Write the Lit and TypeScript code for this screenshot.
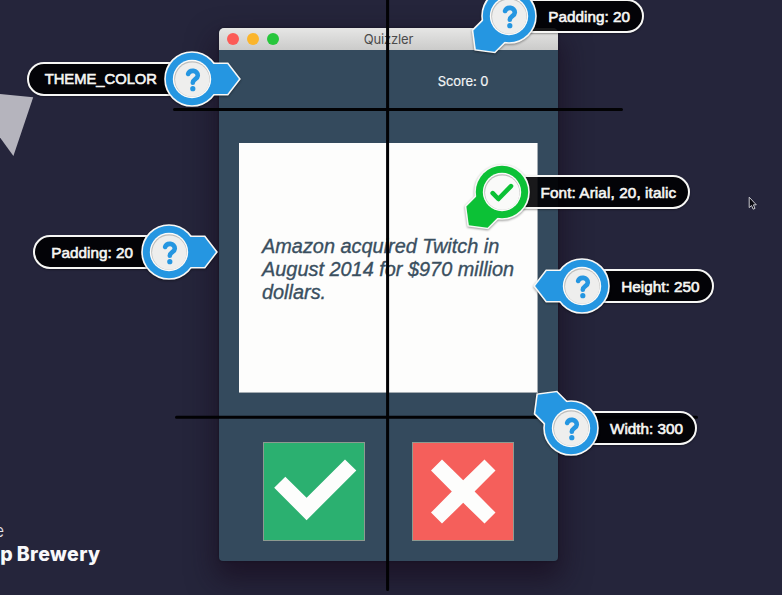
import { LitElement, html, css, svg } from "lit";
import { customElement, property } from "lit/decorators.js";
import { styleMap } from "lit/directives/style-map.js";
import { classMap } from "lit/directives/class-map.js";

type Side = "left" | "right";
type Kind = "question" | "done";

interface Note {
  x: number;
  y: number;
  label: string;
  side: Side;
  reach: number;
  angle: number;
  kind: Kind;
}

const NOTES: Note[] = [
  { x: 191.7, y: 78.8, label: "THEME_COLOR", side: "left", reach: 165, angle: 0, kind: "question" },
  { x: 509.3, y: 16, label: "Padding: 20", side: "right", reach: 135, angle: 135, kind: "question" },
  { x: 501.5, y: 191.5, label: "Font: Arial, 20, italic", side: "right", reach: 188.5, angle: 135, kind: "done" },
  { x: 168.7, y: 251.6, label: "Padding: 20", side: "left", reach: 135.4, angle: 0, kind: "question" },
  { x: 582.2, y: 285.6, label: "Height: 250", side: "right", reach: 131.4, angle: 180, kind: "question" },
  { x: 571, y: 427.5, label: "Width: 300", side: "right", reach: 126, angle: 225, kind: "question" },
];

@customElement("note-callout")
export class NoteCallout extends LitElement {
  @property() label = "";
  @property() side: Side = "right";
  @property() kind: Kind = "question";
  @property({ type: Number }) reach = 130;
  @property({ type: Number }) angle = 0;

  static styles = css`
    :host {
      display: block;
      width: 0;
      height: 0;
    }
    .pill {
      position: absolute;
      top: -17px;
      box-sizing: border-box;
      height: 34px;
      border: 2px solid #f7f7f5;
      background: rgba(0, 0, 2, 0.9);
      color: #f6f6f4;
      font: 15.3px/31px "Liberation Sans", Arial, sans-serif;
      -webkit-text-stroke: 0.6px #f6f6f4;
      white-space: nowrap;
      box-shadow: 0 1px 2px rgba(0, 0, 0, 0.35);
    }
    .right {
      left: 0;
      padding-left: 37px;
      border-radius: 0 17px 17px 0;
    }
    .left {
      right: 0;
      padding-left: 16px;
      border-radius: 17px 0 0 17px;
    }
    .wide {
      font-size: 14.75px;
    }
    .long {
      letter-spacing: 0.1px;
    }
    .badge {
      position: absolute;
      left: -54px;
      top: -54px;
      width: 108px;
      height: 108px;
      filter: drop-shadow(0 1px 1px rgba(0, 0, 0, 0.4));
    }
    .rim {
      fill: #f8f8f6;
      stroke: #f8f8f6;
      stroke-width: 3.2;
    }
    .question {
      fill: #2596e1;
    }
    .done {
      fill: #0cc136;
    }
    .ring {
      fill: #fbfbfa;
    }
    .edge {
      fill: #bdbdbb;
    }
    .face {
      fill: #eeeeed;
    }
    .face-done {
      fill: #fafaf9;
    }
    .mark {
      fill: none;
      stroke-width: 4.6;
      stroke-linecap: round;
      stroke-linejoin: round;
    }
    .mark-question {
      stroke: #2596e1;
    }
    .mark-done {
      stroke: #0cc136;
    }
  `;

  render() {
    const body = svg`
      <circle r="26.2"></circle>
      <path d="M0 -15H35.4L46.9 0L35.4 15H0Z"></path>`;
    const mark =
      this.kind === "question"
        ? svg`
          <path class="mark mark-question" d="M-3.9 -5C-2.4 -9.6 6 -9.2 5.8 -3.4C5.6 .2 .8 .2 .8 3.8"></path>
          <circle class="question" cx="0.8" cy="9.7" r="2.6"></circle>`
        : svg`<path class="mark mark-done" d="M-9.3 1.2L-3.6 7L9 -5.9"></path>`;
    return html`
      <div
        class=${classMap({
          pill: true,
          [this.side]: true,
          wide: this.label === "THEME_COLOR",
          long: this.label.length > 15,
        })}
        style=${styleMap({ width: `${this.reach}px` })}
      >${this.label}</div>
      <svg class="badge" viewBox="-54 -54 108 108">
        <g class="rim" transform="rotate(${this.angle})">${body}</g>
        <g class=${this.kind} transform="rotate(${this.angle})">${body}</g>
        <circle class="ring" r="19.2"></circle>
        <circle class="edge" r="17.8"></circle>
        <circle class=${this.kind === "done" ? "face-done" : "face"} cx="0.3" cy="0.6" r="17.2"></circle>
        ${mark}
      </svg>
    `;
  }
}

@customElement("quiz-window")
export class QuizWindow extends LitElement {
  static styles = css`
    :host {
      display: flex;
      flex-direction: column;
      box-sizing: border-box;
      width: 339px;
      height: 532.5px;
      border-radius: 5px 5px 4px 4px;
      overflow: hidden;
      background: #344a5d;
      box-shadow: 0 14px 28px 4px rgba(22, 10, 28, 0.62), 0 0 3px rgba(0, 0, 0, 0.4);
      font-family: Inter, "Liberation Sans", sans-serif;
    }
    .title-bar {
      display: grid;
      grid-template-columns: 1fr auto 1fr;
      align-items: center;
      height: 22px;
      flex: none;
      background: linear-gradient(#e6e6e5, #cbcbca);
      color: #4b4b4b;
      font-size: 13px;
    }
    .title {
      letter-spacing: -0.15px;
    }
    .lights {
      display: flex;
      gap: 8px;
      padding-left: 8px;
    }
    .light {
      width: 12px;
      height: 12px;
      border-radius: 50%;
    }
    .close { background: #fc5b57; }
    .minimise { background: #fbb52c; }
    .zoom { background: #27c63c; }
    .body {
      display: grid;
      grid-template-columns: 102px 102px;
      grid-template-rows: 61px 249px 99px;
      column-gap: 47px;
      justify-content: center;
    }
    .score {
      grid-column: 2;
      justify-self: center;
      padding-top: 22px;
      color: #f3f5f6;
      font-size: 13px;
      line-height: 18px;
      letter-spacing: -0.1px;
      -webkit-text-stroke: 0.2px #f3f5f6;
    }
    .card {
      grid-column: 1 / -1;
      margin: 32px -24px 0;
      box-sizing: border-box;
      height: 250px;
      padding: 92px 0 0 23px;
      background: #fdfdfc;
      border-bottom: 1px solid #a4acb2;
      border-right: 1px solid #a4acb2;
      color: #3a4f5f;
      font: italic 19.9px/23px "Liberation Sans", Arial, sans-serif;
      -webkit-text-stroke: 0.35px #3a4f5f;
      white-space: nowrap;
    }
    .answer {
      margin: 82px 0 0;
      display: block;
      box-sizing: border-box;
      width: 102px;
      height: 99px;
      padding: 0;
      border: 1px solid #8d9a90;
    }
    .true { background: #2bb070; }
    .false { background: #f55f5b; }
    .glyph {
      display: block;
      width: 100px;
      height: 97px;
      fill: #fdfdfc;
    }
  `;

  render() {
    return html`
      <div class="title-bar">
        <div class="lights">
          <span class="light close"></span>
          <span class="light minimise"></span>
          <span class="light zoom"></span>
        </div>
        <span class="title">Quizzler</span>
      </div>
      <div class="body">
        <div class="score">Score: 0</div>
        <div class="card">Amazon acquired Twitch in<br />August 2014 for $970 million<br />dollars.</div>
        <button class="answer true" aria-label="True">
          <svg class="glyph" viewBox="0 0 100 97">
            <path d="M10.2 44.8L21.3 33.8L42.6 54.8L81 16.5L92.3 27.5L42.6 77.2Z"></path>
          </svg>
        </button>
        <button class="answer false" aria-label="False">
          <svg class="glyph" viewBox="0 0 100 97">
            <path d="M18 27.4L29 16.4L50.2 37.3L71.5 16.4L82.5 27.4L61.6 48.6L82.5 69.6L71.5 80.6L50.2 59.8L29 80.6L18 69.6L38.8 48.6Z"></path>
          </svg>
        </button>
      </div>
    `;
  }
}

@customElement("app-root")
export class AppRoot extends LitElement {
  static styles = css`
    :host {
      display: block;
      position: relative;
      width: 782px;
      height: 595px;
      overflow: hidden;
      background: #25253b;
    }
    .stage {
      display: flex;
      padding: 28px 0 0 219px;
    }
    .overlay {
      position: absolute;
      inset: 0;
      width: 782px;
      height: 595px;
    }
    .shard {
      fill: #b5b4bd;
    }
    .guide {
      stroke: #020204;
      stroke-width: 3;
      stroke-linecap: round;
    }
    .cursor {
      fill: #0b0b12;
      stroke: #c9c9cf;
      stroke-width: 1;
    }
    .note {
      position: absolute;
    }
    .brand {
      position: absolute;
      right: 681.5px;
      bottom: 29px;
      color: #f8f8fa;
      font: 800 19.5px/24px Inter, "Open Sans", sans-serif;
      letter-spacing: 0.4px;
      word-spacing: -1px;
      white-space: nowrap;
    }
    .brand-top {
      position: absolute;
      right: 778px;
      bottom: 53px;
      color: #e4e4ea;
      font: 300 17px/22px Inter, "Open Sans", sans-serif;
      white-space: nowrap;
    }
  `;

  render() {
    return html`
      <div class="stage"><quiz-window></quiz-window></div>
      <svg class="overlay" viewBox="0 0 782 595">
        <path class="shard" d="M0 94L33.2 97.2L13.4 156L0 137.4Z"></path>
        <path class="guide" d="M387.6 -2V589.5M174.5 109.6H621.5M176.5 417.2H696.5"></path>
        <path class="cursor" d="M749.2 197.2V207.6L751.5 205.5L753.2 209.2L755 208.4L753.4 204.8H756.3Z"></path>
      </svg>
      <div class="brand-top">e</div>
      <div class="brand">p Brewery</div>
      ${NOTES.map(
        (n) => html`<note-callout
          class="note"
          style=${styleMap({ left: `${n.x}px`, top: `${n.y}px` })}
          .label=${n.label}
          .side=${n.side}
          .kind=${n.kind}
          .reach=${n.reach}
          .angle=${n.angle}
        ></note-callout>`
      )}
    `;
  }
}
